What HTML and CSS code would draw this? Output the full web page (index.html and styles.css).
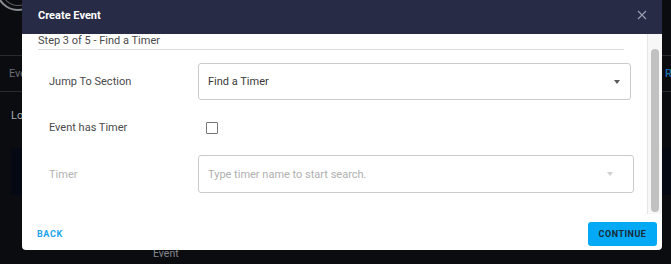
FILE: index.html
```
<!DOCTYPE html>
<html>
<head>
<meta charset="utf-8">
<link rel="stylesheet" href="styles.css">
</head>
<body>
<div class="app">
  <div class="app-top"><div class="logo"></div></div>
  <div class="app-tabs"><span class="tab">Events</span><span class="tab-right"><span>RE</span></span></div>
  <div class="app-sub">Loops</div>
  <div class="app-cards">
    <div class="card"></div>
    <div class="card card-b"><div class="avatar"></div></div>
    <div class="card-label">Event</div>
  </div>
</div>

<div class="modal">
  <div class="modal-head">
    <span class="modal-title">Create Event</span>
    <svg class="close" width="10" height="10" viewBox="0 0 10 10"><path d="M1 1L9 9M9 1L1 9" stroke="#9a9db0" stroke-width="1.2" fill="none"/></svg>
  </div>
  <div class="modal-body">
    <div class="content">
      <div class="step">Step 3 of 5 - Find a Timer</div>
      <div class="form">
        <div class="row">
          <div class="label">Jump To Section</div>
          <div class="select"><span>Find a Timer</span><span class="caret"></span></div>
        </div>
        <div class="row">
          <div class="label">Event has Timer</div>
          <div class="checkbox-wrap"><span class="checkbox"></span></div>
        </div>
        <div class="row">
          <div class="label muted">Timer</div>
          <div class="select input"><span class="placeholder">Type timer name to start search.</span><span class="caret light"></span></div>
        </div>
      </div>
    </div>
    <div class="scrollbar"><div class="thumb"></div></div>
  </div>
  <div class="modal-foot">
    <span class="back">BACK</span>
    <span class="continue">CONTINUE</span>
  </div>
</div>
</body>
</html>
```
FILE: styles.css
```
* { box-sizing: border-box; }
html, body { margin: 0; padding: 0; }
body {
  width: 671px;
  height: 264px;
  overflow: hidden;
  background: #0b0c10;
  font-family: Roboto, "Noto Sans", sans-serif;
  position: relative;
}

/* background app */
.app { display: flex; flex-direction: column; height: 264px; }
.app-top { height: 56px; border-bottom: 1px solid #2a2b30; position: relative; overflow: hidden; }
.logo {
  width: 44px; height: 44px; border-radius: 50%;
  border: 2px solid #8a8c94;
  margin-left: -4px; margin-top: -33px;
  box-shadow: inset 0 0 0 3px #0b0c10, inset 0 0 0 4px #5a5c64;
}
.app-tabs {
  height: 36px; border-bottom: 1px solid #2a2b30;
  display: flex; align-items: center; padding-left: 9px;
  font-size: 11px;
}
.tab { color: #6b6d75; }
.tab-right { margin-left: auto; width: 6px; overflow: hidden; white-space: nowrap; color: #1d6ea8; font-weight: 500; font-size: 11px; }
.app-sub { padding: 17px 0 0 11px; color: #a8aab0; font-size: 11px; height: 56px; }
.app-cards { display: grid; grid-template-columns: 49px 1fr; grid-template-rows: 47px 46px; row-gap: 21px; padding-left: 11px; }
.card { background: #040914; }
.card-b { position: relative; overflow: hidden; }
.avatar { position: absolute; left: 14px; top: 30px; width: 22px; height: 22px; border-radius: 50%; background: #bdbdbd; }
.card-label { grid-column: 2; grid-row: 2; align-self: end; padding-left: 93px; color: #85878d; font-size: 10.5px; line-height: 14px; margin-bottom: 1px; }

/* modal */
.modal {
  position: absolute; left: 22px; top: 0; width: 640px; height: 250px;
  background: #fff; border-radius: 0 0 4px 4px;
  display: flex; flex-direction: column; overflow: hidden;
}
.modal-head {
  height: 34px; flex: none; background: #282b45;
  display: flex; align-items: center; justify-content: space-between;
  padding: 0 15px 4px 16px;
}
.modal-title { color: #fff; font-weight: 700; font-size: 11px; }
.close { display: block; }

.modal-body { height: 180px; flex: none; display: flex; }
.content { flex: 1; padding-left: 16px; overflow: hidden; }
.step {
  font-size: 11px; color: #4a4a4a; line-height: 14px;
  padding-bottom: 1px; border-bottom: 1px solid #dedede;
  margin-right: 23px;
}
.form { display: flex; flex-direction: column; gap: 9px; margin-top: 13px; padding-right: 16px; }
.row { display: grid; grid-template-columns: 160px 1fr; height: 37px; align-items: center; }
.label { padding-left: 11px; font-size: 11px; color: #4a4a4a; }
.label.muted { color: #b3b3b3; }
.select {
  height: 37px; border: 1px solid #cbcbcb; border-radius: 3px;
  display: flex; align-items: center; justify-content: space-between;
  padding: 0 10px 0 9px; font-size: 11px; color: #3a3a3a;
}
.select.input { height: 38px; margin-right: -3px; padding-right: 20px; }
.placeholder { color: #b0b0b0; }
.caret { width: 0; height: 0; border-left: 3.5px solid transparent; border-right: 3.5px solid transparent; border-top: 4px solid #5a5a5a; }
.caret.light { border-top-color: #cfcfcf; }
.checkbox-wrap { padding-left: 8px; display: flex; align-items: center; }
.checkbox { width: 12px; height: 12px; border: 1.5px solid #757575; border-radius: 1px; display: block; }

.scrollbar { width: 15px; flex: none; background: #f7f7f7; border-left: 1px solid #e6e6e6; padding: 15px 0 2px 3px; }
.thumb { width: 8px; height: 163px; background: #c1c1c1; border-radius: 4px; }

.modal-foot {
  flex: 1; display: flex; align-items: center; justify-content: space-between;
  padding: 4px 5px 0 15px;
}
.back { color: #1aa3ee; font-weight: 700; font-size: 9px; letter-spacing: 0.6px; }
.continue {
  width: 69px; height: 24px; background: #03a9f4; border-radius: 3px;
  display: flex; align-items: center; justify-content: center;
  color: #1c2a38; font-weight: 700; font-size: 9px; letter-spacing: 0.5px;
}
```
